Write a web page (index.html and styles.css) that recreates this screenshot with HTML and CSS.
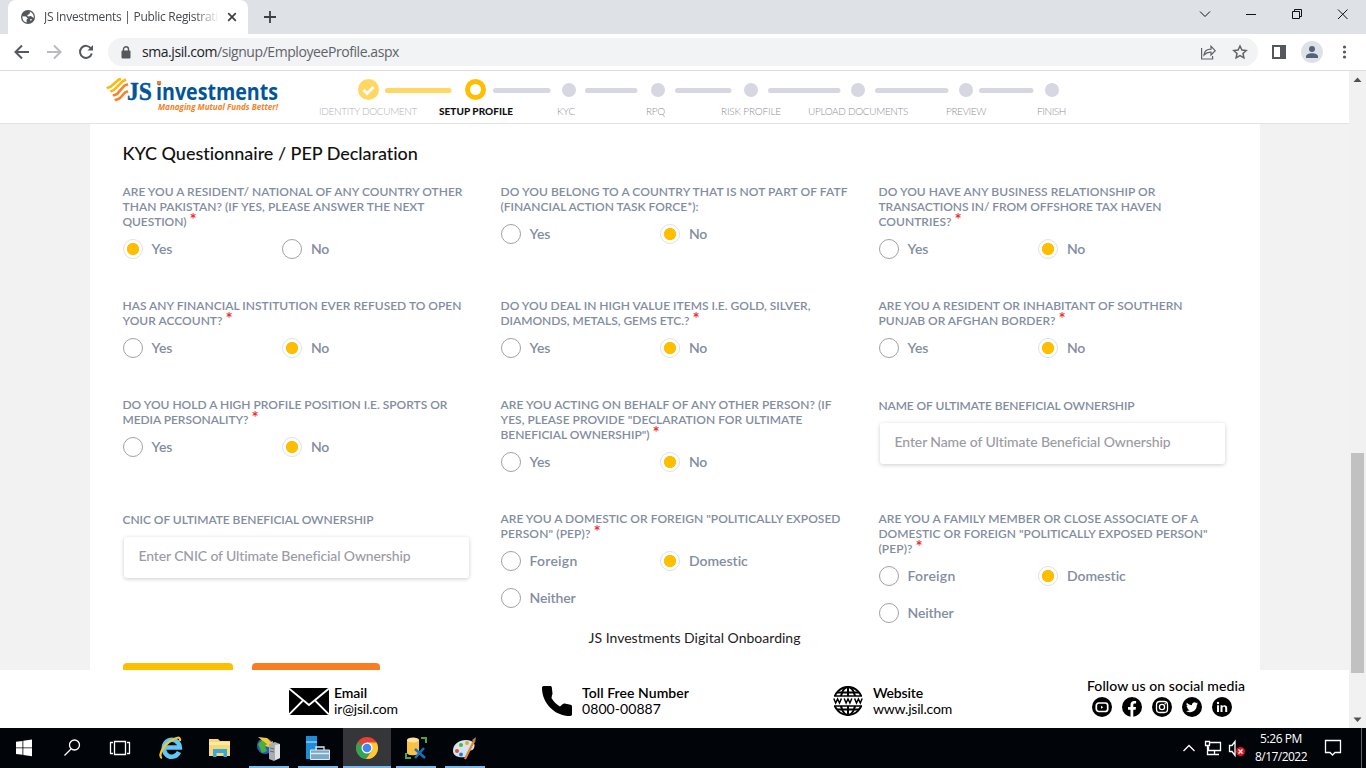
FILE: index.html
```html
<!DOCTYPE html>
<html lang="en">
<head>
<meta charset="utf-8">
<title>JS Investments | Public Registration</title>
<link rel="stylesheet" href="styles.css">
</head>
<body>
<div class="tabstrip">
  <div class="tab">
    <svg class="favicon" width="14" height="14" viewBox="0 0 14 14"><circle cx="7" cy="7" r="7" fill="#54585d"/><path d="M1.5 6.2 5 6.5l1.8 2-1.3 1.3.2 2.7C3 12 1 9.500 1.500 6.200zM6.500 1.500 9 2l-.5 2-2.200 1 .5 1.500 3-.5 3 2c.2-2.500-1-5-3.200-6zM9 9l2 .3-1.200 2z" fill="#fff"/></svg>
    <span class="tab-title"><span data-w="188">JS Investments | Public Registration</span></span>
    <svg class="tab-close" width="10" height="10" viewBox="0 0 10 10"><path d="M1.200 1.200l7.600 7.600M8.800 1.200L1.200 8.800" stroke="#3c4043" stroke-width="1.700"/></svg>
  </div>
  <svg class="newtab" width="12" height="12" viewBox="0 0 12 12"><path d="M6 0v12M0 6h12" stroke="#3c4043" stroke-width="1.800"/></svg>
  <svg class="winctl" width="160" height="34" viewBox="0 0 160 34" fill="none" stroke="#111"><path d="M11 11.500l5 5 5-5M57 14.500h10M149 9.500l9.500 9.500M158.500 9.500l-9.500 9.500"/><path d="M103.500 11.500h7v7h-7zM105.500 11.500v-2h7v7h-2"/></svg>
</div>
<div class="toolbar">
  <svg class="nav" width="90" height="36" viewBox="0 0 90 36" fill="none" stroke="#54585d" stroke-width="2"><path d="M29 18H16M22 11.500L15.500 18l6.500 6.500"/><path stroke="#b9bbbe" d="M47 18h13M54 11.500l6.500 6.500-6.500 6.500"/><path d="M91 14.500a6 6 0 1 0 .8 5"/><path d="M93 11v5.500h-5.500z" fill="#54585d" stroke="none"/></svg>
  <div class="omnibox">
    <svg width="10" height="13" viewBox="0 0 10 13"><rect x=".5" y="4.500" width="9" height="8" rx="1" fill="#54585d"/><path d="M2.500 5V3.200a2.500 2.500 0 0 1 5 0V5" fill="none" stroke="#54585d" stroke-width="1.400"/></svg>
    <span class="url"><span data-w="257"><b>sma.jsil.com</b>/signup/EmployeeProfile.aspx</span></span>
    <svg class="omni-icons" width="48" height="20" viewBox="0 0 48 20" fill="none" stroke="#5f6368" stroke-width="1.200"><path d="M1.600 6v11h11v-3M4 13c.5-4 3-5.800 7-5.800V4.300l4.200 4.400-4.200 4.300v-2.800C8 10 6 11 4 13z"/><path stroke-width="1.500" d="M40 4l1.900 4 4.300.5-3.200 3 .9 4.400-3.900-2.200-3.900 2.200.9-4.400-3.200-3 4.300-.5z"/></svg>
  </div>
  <svg class="tools" width="90" height="36" viewBox="0 0 90 36"><rect x="6" y="12" width="12" height="12" fill="#fff" stroke="#54585d" stroke-width="2"/><path d="M13 11h6v14h-6z" fill="#54585d"/><circle cx="45" cy="18" r="11" fill="#dee1e6"/><circle cx="45" cy="15" r="3" fill="#56617a"/><path d="M39 24v-1.500c0-4.500 12-4.500 12 0V24z" fill="#56617a"/><g fill="#54585d"><circle cx="77.500" cy="13" r="1.600"/><circle cx="77.500" cy="18" r="1.600"/><circle cx="77.500" cy="23" r="1.600"/></g></svg>
</div>

<div class="viewport">
<div class="page">
  <header class="header">
    <svg class="logo" width="174" height="38" viewBox="0 0 174 38">
      <g fill="none" stroke-width="2.600"><path d="M1 12.500c2-1.800 3-.5 5-3L13 3.500l2-.5M4.500 15.800c2-1.800 3-.5 5-3.500L17 5l3-1.500" stroke="#fdb913"/><path d="M7 19.800c2-1.800 4-.5 5.500-3.500L18.500 9.500l3.500-1.300M9 24.500c2-1.800 4-.5 6-3.500l4-4.500 3-1.200" stroke="#f5822a"/></g>
      <text x="21" y="24" class="lg-js" textLength="25" lengthAdjust="spacingAndGlyphs">JS</text>
      <text x="50" y="24" class="lg-inv" textLength="122" lengthAdjust="spacingAndGlyphs">investments</text>
      <path d="M51 5h4v3.500h-4z" fill="#f5822a"/>
      <text x="52" y="33.500" class="lg-tag" textLength="120" lengthAdjust="spacingAndGlyphs">Managing Mutual Funds Better!</text>
    </svg>
    <div class="stepper">
      <svg width="760" height="24" viewBox="319 78 760 24"><circle cx="368.500" cy="89.500" r="10.500" fill="#ffd863"/><path d="M363.500 90l3.500 3.500 6.500-6.500" fill="none" stroke="#fff" stroke-width="2.800"/><circle cx="475.500" cy="89.500" r="8" fill="#fff" stroke="#ffbf00" stroke-width="5"/>
      <path d="M387.500 90.500H449" stroke="#ffd863" stroke-width="5" stroke-linecap="round"/>
      <path d="M495.500 90.500H548M587.500 90.500H635M677.500 90.500H729M770.500 90.500H838M877.500 90.500H946M981.500 90.500H1031" stroke="#d7d7e2" stroke-width="5" stroke-linecap="round"/>
      <g fill="#d7d7e2"><circle cx="569" cy="90" r="7"/><circle cx="658" cy="90" r="7"/><circle cx="751" cy="90" r="7"/><circle cx="858" cy="90" r="7"/><circle cx="966" cy="90" r="7"/><circle cx="1052" cy="90" r="7"/></g></svg>
      <div class="steps"><span class="done"><i data-w="98">IDENTITY DOCUMENT</i></span><span class="now"><i data-w="74">SETUP PROFILE</i></span><span><i data-w="18">KYC</i></span><span><i data-w="19">RPQ</i></span><span><i data-w="60">RISK PROFILE</i></span><span><i data-w="100">UPLOAD DOCUMENTS</i></span><span><i data-w="40">PREVIEW</i></span><span><i data-w="29">FINISH</i></span></div>
    </div>
  </header>
  <main class="card">
    <h1><span data-w="296">KYC Questionnaire / PEP Declaration</span></h1>
    <div class="grid">
      <div class="q"><p><span data-w="340">ARE YOU A RESIDENT/ NATIONAL OF ANY COUNTRY OTHER</span><br><span data-w="302">THAN PAKISTAN? (IF YES, PLEASE ANSWER THE NEXT</span><br><span data-w="64">QUESTION)</span><em>*</em></p>
        <div class="opts"><label class="on"><span data-w="21">Yes</span></label><label><span data-w="18">No</span></label></div></div>
      <div class="q"><p><span data-w="347">DO YOU BELONG TO A COUNTRY THAT IS NOT PART OF FATF</span><br><span data-w="198">(FINANCIAL ACTION TASK FORCE*):</span></p>
        <div class="opts"><label><span data-w="21">Yes</span></label><label class="on"><span data-w="18">No</span></label></div></div>
      <div class="q"><p><span data-w="277">DO YOU HAVE ANY BUSINESS RELATIONSHIP OR</span><br><span data-w="283">TRANSACTIONS IN/ FROM OFFSHORE TAX HAVEN</span><br><span data-w="73">COUNTRIES?</span><em>*</em></p>
        <div class="opts"><label><span data-w="21">Yes</span></label><label class="on"><span data-w="18">No</span></label></div></div>

      <div class="q"><p><span data-w="339">HAS ANY FINANCIAL INSTITUTION EVER REFUSED TO OPEN</span><br><span data-w="100">YOUR ACCOUNT?</span><em>*</em></p>
        <div class="opts"><label><span data-w="21">Yes</span></label><label class="on"><span data-w="18">No</span></label></div></div>
      <div class="q"><p><span data-w="310">DO YOU DEAL IN HIGH VALUE ITEMS I.E. GOLD, SILVER,</span><br><span data-w="189">DIAMONDS, METALS, GEMS ETC.?</span><em>*</em></p>
        <div class="opts"><label><span data-w="21">Yes</span></label><label class="on"><span data-w="18">No</span></label></div></div>
      <div class="q"><p><span data-w="304">ARE YOU A RESIDENT OR INHABITANT OF SOUTHERN</span><br><span data-w="177">PUNJAB OR AFGHAN BORDER?</span><em>*</em></p>
        <div class="opts"><label><span data-w="21">Yes</span></label><label class="on"><span data-w="18">No</span></label></div></div>

      <div class="q"><p><span data-w="325">DO YOU HOLD A HIGH PROFILE POSITION I.E. SPORTS OR</span><br><span data-w="126">MEDIA PERSONALITY?</span><em>*</em></p>
        <div class="opts"><label><span data-w="21">Yes</span></label><label class="on"><span data-w="18">No</span></label></div></div>
      <div class="q"><p><span data-w="331">ARE YOU ACTING ON BEHALF OF ANY OTHER PERSON? (IF</span><br><span data-w="302">YES, PLEASE PROVIDE "DECLARATION FOR ULTIMATE</span><br><span data-w="149">BENEFICIAL OWNERSHIP")</span><em>*</em></p>
        <div class="opts"><label><span data-w="21">Yes</span></label><label class="on"><span data-w="18">No</span></label></div></div>
      <div class="q field"><p><span data-w="256">NAME OF ULTIMATE BENEFICIAL OWNERSHIP</span></p>
        <div class="input"><span data-w="276">Enter Name of Ultimate Beneficial Ownership</span></div></div>

      <div class="q field"><p><span data-w="251">CNIC OF ULTIMATE BENEFICIAL OWNERSHIP</span></p>
        <div class="input"><span data-w="272">Enter CNIC of Ultimate Beneficial Ownership</span></div></div>
      <div class="q"><p><span data-w="340">ARE YOU A DOMESTIC OR FOREIGN "POLITICALLY EXPOSED</span><br><span data-w="90">PERSON" (PEP)?</span><em>*</em></p>
        <div class="opts"><label><span data-w="48">Foreign</span></label><label class="on"><span data-w="59">Domestic</span></label><label><span data-w="46">Neither</span></label></div></div>
      <div class="q"><p><span data-w="320">ARE YOU A FAMILY MEMBER OR CLOSE ASSOCIATE OF A</span><br><span data-w="329">DOMESTIC OR FOREIGN "POLITICALLY EXPOSED PERSON"</span><br><span data-w="34">(PEP)?</span><em>*</em></p>
        <div class="opts"><label><span data-w="48">Foreign</span></label><label class="on"><span data-w="59">Domestic</span></label><label><span data-w="46">Neither</span></label></div></div>
    </div>
    <div class="caption"><span data-w="212">JS Investments Digital Onboarding</span></div>
    <div class="buttons"><div class="btn yellow"></div><div class="btn orange"></div></div>
  </main>
  <footer class="footer">
    <div class="contact mail"><svg width="40" height="29" viewBox="0 0 40 29"><path d="M0 1h40v27H0z"/><path d="M0 1.500L20 18 40 1.500M0 27.500L13.500 14M40 27.500L26.500 14" fill="none" stroke="#fff" stroke-width="1.800"/></svg>
      <div><b data-w="33">Email</b><br><span data-w="64">ir@jsil.com</span></div></div>
    <div class="contact phone"><svg width="30" height="30" viewBox="3 3 18 18"><path d="M8.700 10.200c1.200 2.200 2.900 3.900 5.100 5.100l1.700-1.500c.3-.3.700-.4 1.100-.3l3.500.7c.5.100.9.500.9 1V20c0 .55-.45 1-1 1-9.390 0-17-7.610-17-17 0-.55.45-1 1-1h4c.5 0 .9.400.9.900l.4 3.600c0 .4-.1.800-.3 1z"/></svg>
      <div><b data-w="107">Toll Free Number</b><br><span data-w="79">0800-00887</span></div></div>
    <div class="contact web"><svg width="30" height="30" viewBox="0 0 30 30" fill="none" stroke="#000" stroke-width="2"><circle cx="15" cy="15" r="14"/><ellipse cx="15" cy="15" rx="7.500" ry="14"/><path d="M15 1v28M4 6.500h22M4 23.500h22"/><path d="M0 10h30v10H0z" fill="#fff" stroke="none"/><path d="M1 10h28M1 20h28" stroke-width="1.500"/><path stroke-width="1.500" d="M.8 12.500l1.900 4.500 1.900-4 1.900 4 1.900-4.500M11.200 12.500l1.900 4.500 1.900-4 1.900 4 1.900-4.500M21.600 12.500l1.900 4.500 1.900-4 1.900 4 1.900-4.500"/></svg>
      <div><b data-w="50">Website</b><br><span data-w="79">www.jsil.com</span></div></div>
    <div class="social"><b data-w="158">Follow us on social media</b>
      <div class="icons">
        <svg viewBox="0 0 20 20"><circle cx="10" cy="10" r="10"/><rect x="4.300" y="6" width="11.400" height="8.500" rx="2.500" fill="none" stroke="#fff" stroke-width="1.700"/><path d="M9 8.700l2.300 1.500L9 11.700z" fill="#fff"/></svg>
        <svg viewBox="0 0 20 20"><circle cx="10" cy="10" r="10"/><path d="M8.500 20v-7.200H6V10h2.500V7.800c0-2.500 1.500-3.900 3.700-3.900.9 0 1.900.2 1.900.2v2.300h-1.300c-1.200 0-1.500.7-1.500 1.500V10H14l-.4 2.800h-2.300V20z" fill="#fff"/></svg>
        <svg viewBox="0 0 20 20"><circle cx="10" cy="10" r="10"/><rect x="4.500" y="4.500" width="11" height="11" rx="3.200" fill="none" stroke="#fff" stroke-width="1.300"/><circle cx="10" cy="10" r="2.600" fill="none" stroke="#fff" stroke-width="1.300"/><circle cx="13.200" cy="6.800" r=".8" fill="#fff"/></svg>
        <svg viewBox="0 0 20 20"><circle cx="10" cy="10" r="10"/><path d="M16 6.500c-.5.200-.9.300-1.400.4.500-.3.900-.8 1.100-1.400-.5.300-1 .5-1.600.6a2.500 2.500 0 0 0-4.200 2.200A7 7 0 0 1 4.800 5.700a2.500 2.500 0 0 0 .8 3.300c-.4 0-.8-.1-1.100-.3 0 1.200.8 2.200 2 2.500-.4.100-.8.100-1.100 0 .3 1 1.200 1.700 2.300 1.700A5 5 0 0 1 4 14c5.500 3.300 11-.5 10.800-6.200.5-.4.900-.8 1.200-1.300z" fill="#fff"/></svg>
        <svg viewBox="0 0 20 20"><circle cx="10" cy="10" r="10"/><path d="M5 8.300h2V15H5zM8.500 8.300h2v1c1-1.800 4.700-1.700 4.700 1.500V15h-2v-3.700c0-2-2.700-1.800-2.700 0V15h-2z" fill="#fff"/><circle cx="6" cy="6" r="1.200" fill="#fff"/></svg>
      </div></div>
  </footer>
</div>
<div class="scrollbar"><svg width="17" height="17"><path d="M4.500 11l4-4.500 4 4.500z" fill="#505050"/></svg><div class="thumb"></div><svg width="17" height="17"><path d="M4.500 6.500l4 4.500 4-4.500z" fill="#505050"/></svg></div>
</div>

<div class="taskbar">
  <svg width="500" height="40" viewBox="0 0 500 40">
    <path d="M343 0h48v40h-48z" fill="#35363a"/>
    <path d="M16 13.800l6.500-.9v6.500H16zM23.300 12.700l8.700-1.200v7.900h-8.700zM16 20.300h6.500v6.500l-6.500-.9zM23.300 20.300H32v8l-8.700-1.300z" fill="#fff"/>
    <g fill="none" stroke="#fff" stroke-width="1.300"><circle cx="74.500" cy="17" r="5"/><path d="M71 21l-6.500 6.500M114.500 13.500h11v13h-11zM113 14.500h-2.500v11h2.500M127 14.500h2.500v11H127"/></g>
    <path d="M179 24a8 8.500 0 1 1 .8-4.500H166" fill="none" stroke="#60c8f4" stroke-width="4.500"/><path d="M162 30c-4-1 0-11 7-16s12-6 11-1" fill="none" stroke="#f6c32c" stroke-width="2.200"/>
    <path d="M209 11h9l2 2h10v15h-21z" fill="#f8d775"/><path d="M209 14h21v3h-21z" fill="#ffe9a3"/><path d="M213 21h14v8h-3.500v-4h-7v4H213z" fill="#35a8df"/>
    <circle cx="265" cy="18" r="8" fill="#2360b8"/><path d="M258 16l5-5 5 4-3 4 2 4-5 2z" fill="#4cae3c"/><path d="M258 9l9 1 4 4 2-1-1 7-7-2 2-2-4-3z" fill="#f7c93b"/><path d="M269 16l6-2 5 2v14l-6 3-5-2z" fill="#a9adb0"/><path d="M275 17v15l5-2V16z" fill="#dfe1e2"/><path d="M270 20l4 1M270 23l4 1" stroke="#666"/>
    <path d="M306 8h11v23h-11z" fill="#1e8cd9"/><path d="M306 14h11" stroke="#cdeafe"/><path d="M310.500 22h19v9.500h-19z" fill="#79aac7" stroke="#dceaf2"/><path d="M316 22v-3h8v3M310 25.500h20" stroke="#dceaf2" fill="none" stroke-width="1.300"/>
    <circle cx="367" cy="20" r="11" fill="#e94235"/><path d="M357.500 14.500A11 11 0 0 0 366 31l5.500-9z" fill="#31a552"/><path d="M376.500 14.500H367l5 8-6 8.500a11 11 0 0 0 10.500-16.500z" fill="#fcc934"/><circle cx="367" cy="20" r="5.500" fill="#fff"/><circle cx="367" cy="20" r="4.300" fill="#4285f4"/>
    <path d="M407 12v13c0 3 12 3 12 0V12z" fill="#f7c243"/><ellipse cx="413" cy="12" rx="6" ry="2.500" fill="#ffe3a0"/><path d="M421 10h5v5M406 25v5h5" fill="none" stroke="#4ea24a" stroke-width="2"/><path d="M415 21l10 9M424 20l-9 10" stroke="#1672c1" stroke-width="2.500"/>
    <path d="M453 23c0-7 6-11 13-11s10 4 8 8-5 1-6 4 1 4-3 5-12 0-12-6z" fill="#d5e5ef"/><circle cx="457" cy="23" r="2" fill="#e34b3b"/><circle cx="461" cy="17" r="2" fill="#59ae43"/><circle cx="467" cy="15" r="2" fill="#e9a52d"/><circle cx="461" cy="26.500" r="2" fill="#3477c5"/><path d="M474 13l-9 18" stroke="#df8a32" stroke-width="2.200"/><path d="M472 12l4-3-1 6z" fill="#b77b48"/>
    <path d="M249 38h40v2h-40zM298 38h40v2h-40zM343 38h48v2h-48zM396 38h40v2h-40zM445 38h40v2h-40z" fill="#76b9ed"/>
  </svg>
  <div class="tray">
    <svg width="70" height="40" viewBox="1180 0 70 40" fill="none" stroke="#fff" stroke-width="1.300"><path d="M1183.500 23l5.500-5.500 5.500 5.500M1209.500 14.500h11v8h-12v-4M1214.500 22.500v4M1210 26.500h9M1205.500 13.500h4v4h-4zM1207.500 18v8.500h3M1229.500 17.500h2.500l3-4v14l-3-4h-2.500z"/><circle cx="1240.500" cy="23.500" r="4.500" fill="#e81123" stroke="none"/><path d="M1238.500 21.500l4 4M1242.500 21.500l-4 4"/></svg>
    <div class="clock"><span data-w="42">5:26 PM</span><br><span data-w="52">8/17/2022</span></div>
    <svg class="notif" width="18" height="18" viewBox="0 0 18 18"><path d="M1.500 1.500h15v12H11L8.500 16 6 13.500H1.500z" fill="none" stroke="#fff" stroke-width="1.300"/></svg>
    <div class="peek"></div>
  </div>
</div>
<script src="fit.js"></script>
</body>
</html>
```

FILE: styles.css
```css
*, *::before { box-sizing: border-box; }
body { margin: 0; width: 1366px; height: 768px; overflow: hidden; display: flex; flex-direction: column; background: #fff; font-family: "Lato", "Liberation Sans", sans-serif; }
svg { display: block; flex: none; }
[data-w] { display: inline-block; white-space: nowrap; }
.tabstrip { height: 34px; background: #dee1e6; display: flex; align-items: center; font-family: "Open Sans", sans-serif; }
.tab { width: 240px; height: 34px; margin-left: 8px; background: #fff; border-radius: 8px 8px 0 0; display: flex; align-items: center; padding-left: 13px; }
.tab-title { margin-left: 9px; width: 175px; overflow: hidden; font-size: 12px; line-height: 18px; color: #45494d; white-space: nowrap; -webkit-mask-image: linear-gradient(90deg, #000 86%, transparent); mask-image: linear-gradient(90deg, #000 86%, transparent); }
.tab-close { margin-left: 8px; }
.newtab { margin-left: 16px; }
.winctl { margin-left: auto; margin-right: 17px; }
.toolbar { height: 37px; background: #fff; border-bottom: 1px solid #dadce0; display: flex; align-items: center; }
.nav { overflow: visible; }
.omnibox { margin-left: 18px; width: 1150px; height: 28px; border-radius: 14px; background: #f1f3f4; display: flex; align-items: center; padding-left: 13px; }
.url { margin-left: 11px; font: 14px/20px "Open Sans", sans-serif; color: #5f6368; }
.url b { font-weight: 400; color: #202124; }
.omni-icons { margin-left: auto; margin-right: 10px; }
.tools { margin-left: 9px; }
.viewport { height: 657px; display: flex; }
.page { width: 1349px; display: flex; flex-direction: column; background: #f2f2f2; }
.header { height: 53px; background: #fff; border-bottom: 1px solid #e3e3e6; display: flex; flex: none; }
.logo { margin: 5px 0 0 106px; }
.lg-js { font: bold 26px "Liberation Serif", serif; fill: #00559b; stroke: #00559b; stroke-width: .4px; }
.lg-inv { font: bold 24px "Open Sans", sans-serif; fill: #00559b; }
.lg-tag { font: italic bold 9.500px "Open Sans", sans-serif; fill: #f5822a; }
.stepper { margin: 7px 0 0 39px; }
.steps { display: grid; grid-template-columns: 120px 118px 89px 75px 87px 138px 91px 40px; font-size: 10px; line-height: 14px; padding-top: 2px; color: #8d8e97; font-weight: 300; }
.steps i { font-style: normal; }
.steps .done { color: #b0b0b6; }
.steps .now { color: #111; font-weight: 900; }
.card { width: 1170px; height: 546px; margin-left: 90px; background: #fff; padding: 18px 0 0 32.500px; overflow: hidden; flex: none; }
h1 { margin: 0; font-size: 18px; line-height: 22px; font-weight: 500; color: #111; }
.grid { display: grid; grid-template-columns: repeat(3, 347px); column-gap: 31px; grid-template-rows: 114px 99px 114px 120px; margin-top: 20px; }
.q p { margin: 0; font-size: 12px; line-height: 15px; font-weight: 600; color: #828da0; }
.q em { font-style: normal; font-size: 17px; line-height: 10px; color: #f0322f; margin-left: 3px; }
.opts { display: flex; flex-wrap: wrap; row-gap: 17px; padding-top: 10px; }
.opts label { width: 159.500px; height: 20px; display: flex; align-items: center; gap: 9px; font-size: 14px; line-height: 20px; font-weight: 600; color: #828da0; }
.opts label > span { margin-top: -1px; }
.opts label::before { content: ""; width: 20px; height: 20px; border: 1px solid #a2a2a2; border-radius: 50%; flex: none; }
.opts .on::before { border-color: #e1e1e4; background: radial-gradient(circle, #ffbf00 5.700px, #fff 6.500px); }
.field { padding-top: 1px; }
.input { margin: 10px .5px 0 1px; height: 41px; border-radius: 3px; box-shadow: 0 1px 4px rgba(0,0,0,.2); font-size: 14px; line-height: 38px; padding-left: 15px; color: #9b9ba3; font-weight: 500; }
.caption { padding-left: 466px; font-size: 14px; line-height: 20px; margin-top: -3px; color: #222; }
.buttons { display: flex; gap: 19px; margin: 15px 0 0 .5px; }
.btn { height: 40px; border-radius: 4px; }
.yellow { width: 110px; background: #ffbf00; }
.orange { width: 128px; background: #fa7d22; }
.footer { height: 58px; background: #fff; display: flex; align-items: flex-start; color: #000; font-size: 14px; line-height: 16px; }
.footer b { font-weight: 600; }
.contact { display: flex; align-items: center; padding-top: 15px; }
.mail { margin-left: 289px; width: 253px; gap: 5px; }
.phone { width: 291px; gap: 10px; }
.web { width: 254px; gap: 10px; }
.social { padding-top: 8px; }
.social b { font-weight: 500; }
.icons { display: flex; gap: 10px; padding: 3px 0 0 5px; }
.icons svg { width: 20px; height: 20px; }
.scrollbar { width: 17px; background: #f1f1f1; display: flex; flex-direction: column; }
.thumb { width: 13px; height: 220px; margin: 365px 2px auto; background: #c1c1c1; }
.taskbar { height: 40px; background: #010409; display: flex; justify-content: space-between; }
.tray { display: flex; width: 186px; align-items: center; }
.clock { width: 62px; text-align: center; color: #fff; font: 12px/18px "Open Sans", sans-serif; }
.notif { margin-left: 12px; }
.peek { width: 1px; height: 40px; background: #60636a; margin-left: 19px; }
```

FILE: fit.js
```js
document.querySelectorAll('[data-w]').forEach(function (el) {
  var natural = el.getBoundingClientRect().width;
  var gap = (parseFloat(el.dataset.w) - natural) / el.textContent.length;
  el.style.letterSpacing = gap.toFixed(3) + 'px';
});
```
